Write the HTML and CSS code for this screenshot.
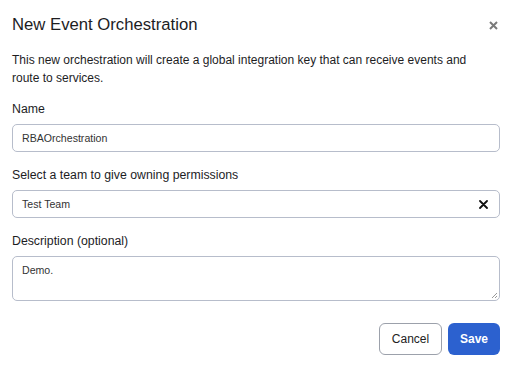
FILE: index.html
```html
<!DOCTYPE html>
<html lang="en">
<head>
    <meta charset="UTF-8">
    <title>New Event Orchestration</title>
    <link rel="stylesheet" href="styles.css">
</head>
<body>
    <div class="modal">
        <div class="modal-header">
            <h2>New Event Orchestration</h2>
            <button class="close"><svg width="9" height="9" viewBox="0 0 9 9"><path d="M1 1L8 8M8 1L1 8" stroke="#7a7a7a" stroke-width="2"/></svg></button>
        </div>
        <p class="intro">This new orchestration will create a global integration key that can receive events and route to services.</p>

        <label class="field-label">Name</label>
        <div class="input">RBAOrchestration</div>

        <label class="field-label">Select a team to give owning permissions</label>
        <div class="input select">
            <span>Test Team</span>
            <svg class="clear" width="9" height="9" viewBox="0 0 9 9"><path d="M1 1L8 8M8 1L1 8" stroke="#111" stroke-width="1.8" stroke-linecap="round"/></svg>
        </div>

        <label class="field-label">Description (optional)</label>
        <div class="input textarea">Demo.
            <svg class="grip" width="7" height="7" viewBox="0 0 7 7"><path d="M6 1L1 6M6 4L4 6" stroke="#999" stroke-width="1"/></svg>
        </div>

        <div class="actions">
            <button class="btn cancel">Cancel</button>
            <button class="btn save">Save</button>
        </div>
    </div>
</body>
</html>
```

FILE: styles.css
```css
body {
    font-family: 'Liberation Sans', Arial, sans-serif;
    margin: 0;
    background: #fff;
    color: #1d1d1f;
}

.modal {
    padding: 15px 12px 0 12px;
    display: flex;
    flex-direction: column;
}

.modal-header {
    display: flex;
    justify-content: space-between;
    align-items: center;
    height: 20px;
}

.modal-header h2 {
    font-size: 16.7px;
    font-weight: normal;
    margin: 0;
}

.close {
    border: none;
    background: none;
    padding: 0;
    margin-right: 2px;
    display: flex;
    cursor: pointer;
}

.intro {
    font-size: 12px;
    line-height: 18px;
    max-width: 470px;
    margin: 16px 0 0 0;
}

.field-label {
    font-size: 12.3px;
    line-height: 16px;
    margin-top: 15px;
    margin-bottom: 7px;
}

.intro + .field-label {
    margin-top: 14px;
}

.input {
    box-sizing: border-box;
    height: 28px;
    border: 1px solid #b7bdcb;
    border-radius: 5px;
    font-size: 10.6px;
    color: #333;
    padding: 0 9px;
    display: flex;
    align-items: center;
}

.select {
    justify-content: space-between;
    padding-right: 11px;
}

.textarea {
    height: 45px;
    align-items: flex-start;
    padding-top: 7px;
    position: relative;
}

.grip {
    position: absolute;
    right: 1px;
    bottom: 1px;
}

.actions {
    display: flex;
    justify-content: flex-end;
    gap: 6px;
    margin-top: 22px;
}

.btn {
    font-family: 'Liberation Sans', Arial, sans-serif;
    font-size: 12px;
    height: 32px;
    border-radius: 6px;
    cursor: pointer;
}

.cancel {
    width: 63px;
    background: #fff;
    border: 1px solid #9ca1ab;
    color: #222;
}

.save {
    width: 52px;
    background: #2c61cf;
    border: none;
    color: #fff;
    font-weight: bold;
}
```
